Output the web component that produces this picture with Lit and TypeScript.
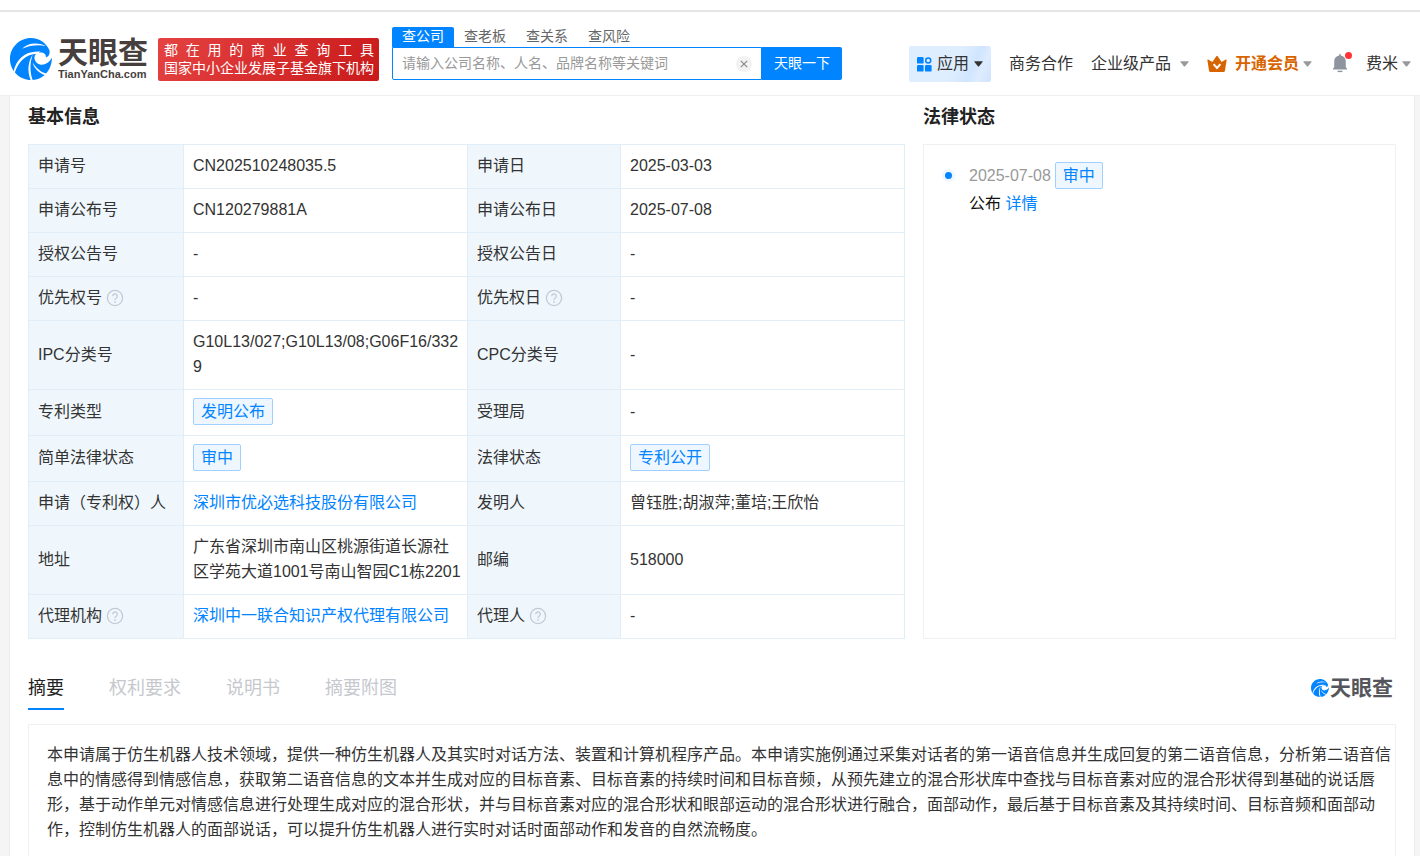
import { LitElement, html, css, svg, nothing, type TemplateResult } from "lit";
import { customElement, property } from "lit/decorators.js";

type Cell = {
  text: string;
  kind?: "tag" | "link";
};

type Field = {
  label: string;
  help?: boolean;
  value: Cell;
};

const dash: Cell = { text: "-" };

const rows: [Field, Field][] = [
  [
    { label: "申请号", value: { text: "CN202510248035.5" } },
    { label: "申请日", value: { text: "2025-03-03" } },
  ],
  [
    { label: "申请公布号", value: { text: "CN120279881A" } },
    { label: "申请公布日", value: { text: "2025-07-08" } },
  ],
  [
    { label: "授权公告号", value: dash },
    { label: "授权公告日", value: dash },
  ],
  [
    { label: "优先权号", help: true, value: dash },
    { label: "优先权日", help: true, value: dash },
  ],
  [
    { label: "IPC分类号", value: { text: "G10L13/027;G10L13/08;G06F16/3329" } },
    { label: "CPC分类号", value: dash },
  ],
  [
    { label: "专利类型", value: { text: "发明公布", kind: "tag" } },
    { label: "受理局", value: dash },
  ],
  [
    { label: "简单法律状态", value: { text: "审中", kind: "tag" } },
    { label: "法律状态", value: { text: "专利公开", kind: "tag" } },
  ],
  [
    { label: "申请（专利权）人", value: { text: "深圳市优必选科技股份有限公司", kind: "link" } },
    { label: "发明人", value: { text: "曾钰胜;胡淑萍;董培;王欣怡" } },
  ],
  [
    { label: "地址", value: { text: "广东省深圳市南山区桃源街道长源社区学苑大道1001号南山智园C1栋2201" } },
    { label: "邮编", value: { text: "518000" } },
  ],
  [
    { label: "代理机构", help: true, value: { text: "深圳中一联合知识产权代理有限公司", kind: "link" } },
    { label: "代理人", help: true, value: dash },
  ],
];

const abstractText =
  "本申请属于仿生机器人技术领域，提供一种仿生机器人及其实时对话方法、装置和计算机程序产品。本申请实施例通过采集对话者的第一语音信息并生成回复的第二语音信息，分析第二语音信息中的情感得到情感信息，获取第二语音信息的文本并生成对应的目标音素、目标音素的持续时间和目标音频，从预先建立的混合形状库中查找与目标音素对应的混合形状得到基础的说话唇形，基于动作单元对情感信息进行处理生成对应的混合形状，并与目标音素对应的混合形状和眼部运动的混合形状进行融合，面部动作，最后基于目标音素及其持续时间、目标音频和面部动作，控制仿生机器人的面部说话，可以提升仿生机器人进行实时对话时面部动作和发音的自然流畅度。";

const swirl = svg`
  <path fill="#0084ff" d="M21 0C9.400 0 0 9.400 0 21s9.400 21 21 21c5 0 9.500-1.700 13.100-4.600C38.500 33.500 41.800 28 42 19.500 39.500 24.500 34.500 27.500 30 26.500 26 25.500 23.500 21.500 24.800 17.800 25.800 15.200 29 14 32 14.600 35 15.200 36 17 36 19.500 38.500 18.500 40 16.500 39.500 12.500 36.500 5 29.500 0 21 0Z"/>
  <path fill="#fff" d="M12 10.800C18 5.400 26 3.800 36 8 27.500 6.600 20 7.400 12 10.800Z"/>
  <path fill="#fff" d="M3.600 33.500C6 22 14.500 12.400 30.500 13.600L27.500 16C15.500 16 8.500 23.500 4.600 35Z"/>
  <path fill="#fff" d="M23 16.500C20 23 19.500 33 22.600 42L20.600 42C17 32.500 18 23 23 16.500Z"/>
  <path fill="#fff" d="M22.600 24.500C25.500 29.500 30.500 34 36.200 35.600L34.600 37C29 35 24 30.500 22.600 24.500Z"/>
`;

const helpIcon = html`<svg class="help" viewBox="0 0 18 18" role="img" aria-label="说明">
  <circle cx="9" cy="9" r="7.600" fill="none" stroke="#c5c9d1" stroke-width="1.300" />
  <path d="M6.700 7.300a2.300 2.300 0 1 1 3.400 2C9.400 9.700 9 10 9 10.900" fill="none" stroke="#c5c9d1" stroke-width="1.300" />
  <circle cx="9" cy="12.900" r=".9" fill="#c5c9d1" />
</svg>`;

const caret = html`<svg class="caret" viewBox="0 0 10 6" aria-hidden="true">
  <path d="M1 0h8q1 0 .5 .9L5.700 5.500q-.7 .8-1.400 0L.5 .9Q0 0 1 0Z" fill="currentColor" />
</svg>`;

const base = css`
  * {
    box-sizing: border-box;
  }
  a {
    color: inherit;
    text-decoration: none;
  }
  button,
  input {
    font: inherit;
    border: 0;
    margin: 0;
    padding: 0;
    background: none;
    color: inherit;
  }
  button {
    cursor: pointer;
  }
`;

@customElement("site-logo")
export class SiteLogo extends LitElement {
  @property({ type: Boolean }) compact = false;

  static styles = [
    base,
    css`
      :host {
        display: block;
      }
      .logo {
        display: flex;
        align-items: center;
        gap: 6px;
        color: #463f3d;
      }
      .mark {
        width: 42px;
        height: 42px;
        flex: none;
      }
      .words {
        display: grid;
      }
      .name {
        font-size: 30px;
        line-height: 30px;
        font-weight: 700;
      }
      .domain {
        font-size: 11px;
        line-height: 12px;
        font-weight: 700;
      }
      .compact {
        gap: 1px;
        color: #55565b;
      }
      .compact .mark {
        width: 18px;
        height: 18px;
      }
      .compact .name {
        font-size: 21px;
        line-height: 24px;
      }
    `,
  ];

  render() {
    return html`<a class="logo ${this.compact ? "compact" : ""}" href="#">
      <svg class="mark" viewBox="0 0 42 42" aria-hidden="true">${swirl}</svg>
      <span class="words">
        <span class="name">天眼查</span>
        ${this.compact ? nothing : html`<span class="domain">TianYanCha.com</span>`}
      </span>
    </a>`;
  }
}

@customElement("site-header")
export class SiteHeader extends LitElement {
  static styles = [
    base,
    css`
      :host {
        display: block;
        background: #fff;
        border-bottom: 1px solid #f0f0f0;
      }
      .strip {
        height: 12px;
        border-bottom: 2px solid #e5e5e5;
      }
      .bar {
        display: flex;
        align-items: flex-start;
        padding: 15px 9px 13px 10px;
      }
      .brand {
        margin-top: 11px;
        width: 138px;
        flex: none;
      }
      .banner {
        flex: none;
        margin: 11px 13px 0 10px;
        padding: 3px 5px 4px 6px;
        width: 221px;
        border-radius: 2px;
        background: linear-gradient(120deg, #e54242, #c91a1a);
        color: #fff;
        font-size: 14px;
        line-height: 18px;
        white-space: nowrap;
      }
      .wide {
        display: flex;
        justify-content: space-between;
      }
      .search {
        flex: 0 1 450px;
        min-width: 0;
      }
      .kinds {
        display: flex;
        font-size: 14px;
        line-height: 18px;
        color: #666;
      }
      .kind {
        padding: 0 10px 2px;
        height: 20px;
      }
      .kind.on {
        background: #0084ff;
        color: #fff;
        border-radius: 2px 2px 0 0;
      }
      .field {
        display: flex;
        height: 33px;
      }
      .box {
        flex: 1;
        min-width: 0;
        display: flex;
        align-items: center;
        border: 1px solid #0084ff;
        border-radius: 0 0 0 2px;
        padding: 0 9px;
      }
      .query {
        flex: 1;
        min-width: 0;
        font-size: 14px;
        outline: 0;
        color: #333;
      }
      .query::placeholder {
        color: #999;
        opacity: 1;
      }
      .clear {
        width: 16px;
        height: 16px;
        display: block;
      }
      .clear svg {
        display: block;
      }
      .go {
        width: 80px;
        background: #0084ff;
        color: #fff;
        font-size: 14px;
        border-radius: 0 2px 2px 0;
      }
      .nav {
        margin-left: auto;
        padding-top: 19px;
        display: flex;
        align-items: center;
        flex: none;
        font-size: 16px;
        line-height: 24px;
        color: #333;
      }
      .item {
        display: flex;
        align-items: center;
        margin-left: 18px;
        white-space: nowrap;
      }
      .apps {
        height: 36px;
        padding: 0 8px;
        gap: 5px;
        border-radius: 2px;
        background: linear-gradient(115deg, #deeeff 55%, #d0e5fe 75%, #deecff 85%, #cfe3fd);
      }
      .caret {
        width: 9px;
        height: 6px;
        margin-left: 4px;
        color: #999;
      }
      .apps .caret {
        margin-left: 0;
        color: #333;
      }
      .item.spread {
        gap: 5px;
      }
      .vip {
        color: #d86400;
        font-weight: 700;
      }
      .crown {
        width: 20px;
        height: 18px;
        margin-right: 8px;
      }
      .alerts {
        position: relative;
        margin-left: 20px;
      }
      .bell {
        width: 16px;
        height: 20px;
        display: block;
      }
      .dot {
        position: absolute;
        right: -4px;
        top: -2px;
        width: 7px;
        height: 7px;
        border-radius: 50%;
        background: #ff3333;
      }
    `,
  ];

  render() {
    return html`
      <div class="strip"></div>
      <div class="bar">
        <site-logo class="brand"></site-logo>
        <div class="banner">
          <div class="wide">${[..."都在用的商业查询工具"].map((c) => html`<span>${c}</span>`)}</div>
          <div>国家中小企业发展子基金旗下机构</div>
        </div>
        <form class="search" @submit=${(e: Event) => e.preventDefault()}>
          <div class="kinds">
            ${["查公司", "查老板", "查关系", "查风险"].map(
              (t, i) => html`<button type="button" class="kind ${i === 0 ? "on" : ""}">${t}</button>`
            )}
          </div>
          <div class="field">
            <div class="box">
              <input
                class="query"
                type="text"
                aria-label="搜索"
                placeholder="请输入公司名称、人名、品牌名称等关键词"
              />
              <button class="clear" type="button" aria-label="清空">
                <svg width="16" height="16" viewBox="0 0 16 16">
                  <circle cx="8" cy="8" r="8" fill="#f3f3f3" />
                  <path d="M4.800 4.800l6.400 6.400M11.200 4.800l-6.400 6.400" stroke="#888" stroke-width="1.200" />
                </svg>
              </button>
            </div>
            <button class="go" type="submit">天眼一下</button>
          </div>
        </form>
        <nav class="nav">
          <button class="item apps" type="button">
            <svg width="15" height="15" viewBox="0 0 15 15" aria-hidden="true">
              <rect x="0" y="0" width="6.600" height="6.600" rx="1.200" fill="#0084ff" />
              <rect x="0" y="8" width="6.600" height="6.600" rx="1.200" fill="#0084ff" />
              <rect x="8" y="8" width="6.600" height="6.600" rx="1.200" fill="#0084ff" />
              <circle cx="11.200" cy="3.400" r="2.500" fill="none" stroke="#0084ff" stroke-width="1.500" />
            </svg>
            <span>应用</span>${caret}
          </button>
          <a class="item" href="#">商务合作</a>
          <a class="item spread" href="#">企业级产品 ${caret}</a>
          <a class="item vip" href="#">
            <svg class="crown" viewBox="0 0 20 18" aria-hidden="true">
              <path
                d="M1.200 4.600 5.400 7 9.300 1.300q.7-.9 1.400 0L14.600 7l4.200-2.400q.9-.3 .8 .6L18 15.500q-.2 1.500-1.600 1.500H3.600Q2.200 17 2 15.500L.4 5.200q-.1-.9 .8-.6Z"
                fill="#d86400"
              />
              <path d="M6.600 9.200 10 13l3.400-3.800" fill="none" stroke="#fff" stroke-width="2" />
            </svg>
            开通会员${caret}
          </a>
          <button class="item alerts" type="button" aria-label="消息">
            <svg class="bell" viewBox="0 0 16 20">
              <path
                d="M7.200 1.500V.3q.8-.5 1.600 0v1.200C12 2 13.800 4.500 13.800 7.500v5.700l1.200 1.300v1H1v-1l1.200-1.300V7.500c0-3 1.800-5.500 5-6Z"
                fill="#8f959e"
              />
              <path d="M5.600 17.400h4.800" stroke="#8f959e" stroke-width="1.400" />
            </svg>
            <span class="dot"></span>
          </button>
          <a class="item" href="#">费米${caret}</a>
        </nav>
      </div>
    `;
  }
}

@customElement("app-root")
export class AppRoot extends LitElement {
  static styles = [
    base,
    css`
      :host {
        display: flex;
        flex-direction: column;
        min-height: 100vh;
        background: #f5f5f5;
        color: #333;
        font-family: "Liberation Sans", "Noto Sans CJK SC", sans-serif;
        font-size: 16px;
        line-height: 25px;
      }
      .sheet {
        flex: 1;
        display: flex;
        flex-direction: column;
        margin: 0 5px 0 9px;
        padding: 9px 18px 0;
        border: solid #ececec;
        border-width: 0 1px;
        background: #fff;
      }
      .columns {
        display: grid;
        grid-template-columns: minmax(0, 1fr) minmax(0, 473px);
        gap: 14px 18px;
      }
      .title {
        margin: 0;
        font-size: 18px;
        line-height: 25px;
        font-weight: 700;
        color: #222;
      }
      .info {
        width: 100%;
        border-collapse: collapse;
        table-layout: fixed;
      }
      .label-a {
        width: 155px;
      }
      .label-b {
        width: 153px;
      }
      .info th,
      .info td {
        border: 1px solid #e1eef7;
        padding: 8px 4px 10px 9px;
        text-align: left;
        font-weight: 400;
        overflow-wrap: anywhere;
      }
      .info th {
        background: #eff7fd;
      }
      .help {
        width: 18px;
        height: 18px;
        margin-left: 4px;
        vertical-align: -4px;
      }
      .tag {
        display: inline-block;
        vertical-align: top;
        padding: 0 7px;
        border: 1px solid #a0d0ff;
        border-radius: 2px;
        background: #eef7ff;
        color: #0084ff;
      }
      .link {
        color: #0084ff;
      }
      .legal {
        margin: 0;
        padding: 17px 18px;
        list-style: none;
        border: 1px solid #eef0f4;
      }
      .event {
        display: grid;
        grid-template-columns: 14px 1fr;
        gap: 2px 13px;
        align-items: center;
      }
      .point {
        width: 13px;
        height: 13px;
        border: 3px solid #eef7ff;
        border-radius: 50%;
        background: #0084ff;
      }
      .when {
        display: flex;
        align-items: center;
        gap: 4px;
        color: #999;
      }
      .what {
        grid-column: 2;
        color: #111;
      }
      .switch {
        display: flex;
        justify-content: space-between;
        align-items: flex-start;
        margin-top: 37px;
      }
      .tabs {
        display: flex;
        gap: 45px;
      }
      .tab {
        padding-bottom: 8px;
        border-bottom: 2px solid transparent;
        font-size: 18px;
        line-height: 24px;
        color: #c6c8ce;
      }
      .tab.on {
        color: #222;
        border-color: #0084ff;
      }
      .small {
        margin-right: 3px;
      }
      .abstract {
        flex: 1;
        margin-top: 14px;
        padding: 17px 4px 12px 18px;
        border: solid #eef0f4;
        border-width: 1px 1px 0;
      }
      .abstract p {
        margin: 0;
      }
    `,
  ];

  private cell(c: Cell): TemplateResult {
    if (c.kind === "tag") return html`<span class="tag">${c.text}</span>`;
    if (c.kind === "link") return html`<a class="link" href="#">${c.text}</a>`;
    return html`${c.text}`;
  }

  private field(f: Field): TemplateResult {
    return html`<th scope="row">${f.label}${f.help ? helpIcon : nothing}</th><td>${this.cell(f.value)}</td>`;
  }

  render() {
    return html`
      <site-header></site-header>
      <main class="sheet">
        <div class="columns">
          <h2 class="title">基本信息</h2>
          <h2 class="title">法律状态</h2>
          <table class="info">
            <colgroup>
              <col class="label-a" />
              <col />
              <col class="label-b" />
              <col />
            </colgroup>
            <tbody>
              ${rows.map(([a, b]) => html`<tr>${this.field(a)}${this.field(b)}</tr>`)}
            </tbody>
          </table>
          <ul class="legal">
            <li class="event">
              <span class="point"></span>
              <span class="when">2025-07-08 <span class="tag">审中</span></span>
              <span class="what">公布 <a class="link" href="#">详情</a></span>
            </li>
          </ul>
        </div>
        <div class="switch">
          <div class="tabs" role="tablist">
            ${["摘要", "权利要求", "说明书", "摘要附图"].map(
              (t, i) =>
                html`<button type="button" role="tab" aria-selected=${i === 0} class="tab ${i === 0 ? "on" : ""}">${t}</button>`
            )}
          </div>
          <site-logo class="small" compact></site-logo>
        </div>
        <section class="abstract"><p>${abstractText}</p></section>
      </main>
    `;
  }
}
